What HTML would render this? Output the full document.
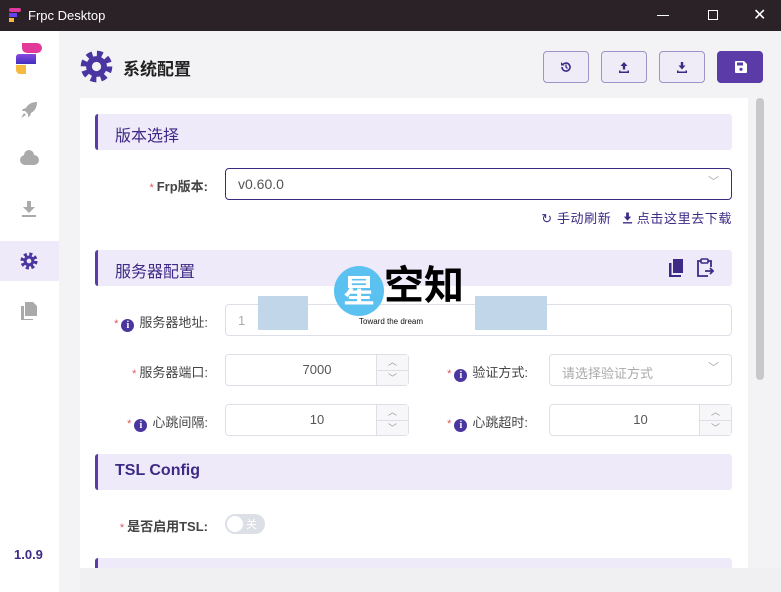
<!DOCTYPE html>
<html><head><meta charset="utf-8"><style>
*{box-sizing:border-box;margin:0;padding:0}
body{width:781px;height:592px;overflow:hidden;font-family:"Liberation Sans","Noto Sans CJK SC",sans-serif;background:#f3f3f5;position:relative;color:#333}
.abs{position:absolute}
.tb{left:0;top:0;width:781px;height:31px;background:#2a2226;color:#fff;font-size:13px}
.side{left:0;top:31px;width:59px;height:561px;background:#fff}
.card{left:80px;top:98px;width:668px;height:494px;background:#fff}
.sh{left:95px;width:637px;height:36px;background:#efeafa;border-left:3px solid #5a3ba8;border-radius:3px;color:#3d2a86;font-size:16px;padding:8px 0 0 17px}
.lbl{font-size:13px;color:#444;text-align:right}
.lbl .s{color:#e0555f;font-size:11px;margin-right:3px}
.i{display:inline-block;width:13px;height:13px;border-radius:50%;background:#4b35a0;color:#fff;font-size:10px;text-align:center;line-height:13px;font-weight:bold;font-family:"Liberation Serif",serif;margin-right:5px;vertical-align:-1px}
.inp{border:1px solid #dcdfe6;border-radius:4px;height:32px;background:#fff;font-size:13px;color:#555}
.num{text-align:center;line-height:30px}
.sp{position:absolute;right:0;top:0;width:32px;height:30px;border-left:1px solid #dcdfe6;background:#f7f7f9;font-size:9px;color:#999;text-align:center}
.sp div{height:15px;line-height:15px}
.sp div+div{border-top:1px solid #dcdfe6}
.btn{top:51px;width:46px;height:32px;border:1px solid #9d93c6;border-radius:4px;background:#efecf8}
.btn svg{position:absolute;left:16px;top:9px}
</style></head><body>
<div class="abs tb"><div class="abs" style="left:9px;top:8px;width:12px;height:15px">
<div style="height:4px;background:#e23a9a;border-radius:2px"></div><div style="width:8px;height:4px;background:#6a3ff0;margin-top:1px"></div><div style="width:5px;height:4px;background:#f5b940;margin-top:1px"></div></div>
<span class="abs" style="left:28px;top:8px">Frpc Desktop</span>
<div class="abs" style="left:657px;top:15px;width:12px;height:1px;background:#fff"></div>
<div class="abs" style="left:708px;top:10px;width:10px;height:10px;border:1px solid #fff"></div>
<span class="abs" style="left:753px;top:5px;font-size:16px">✕</span></div>
<div class="abs side">
<div class="abs" style="left:16px;top:12px;width:26px;height:36px">
<div style="height:10px;background:#e23a9a;border-radius:0 5px 5px 5px;margin-left:6px"></div>
<div style="width:20px;height:10px;background:linear-gradient(#8a48e0,#4030c0);margin-top:1px;border-radius:3px 0 0 0"></div>
<div style="width:10px;height:9px;background:#f5b940;margin-top:1px;border-radius:0 0 0 4px"></div></div>
<svg class="abs" style="left:20px;top:70px" width="18" height="18" viewBox="0 0 18 18"><path d="M17 1C12 1 8 3 6 7L3 8 2 10 5 10 8 13 8 16 10 15 11 12C15 10 17 6 17 1Z" fill="#aaa"/><path d="M4 12 1 17 6 14Z" fill="#aaa"/></svg>
<div class="abs" style="left:20px;top:124px;width:19px;height:10px;background:#aaa;border-radius:6px"></div>
<div class="abs" style="left:24px;top:119px;width:10px;height:10px;background:#aaa;border-radius:50%"></div>
<svg class="abs" style="left:22px;top:170px" width="14" height="16" viewBox="0 0 14 16"><path d="M5 0H9V6H13L7 12 1 6H5Z M0 14H14V16H0Z" fill="#aaa"/></svg>
<div class="abs" style="left:0;top:210px;width:59px;height:40px;background:#efeafa"></div>
<svg class="abs" style="left:20px;top:221px" width="18" height="18" viewBox="-10 -10 20 20"><circle r="7.5" fill="none" stroke="#4b35a0" stroke-width="4" stroke-dasharray="3.3 2.6"/><circle r="6" fill="#4b35a0"/><circle r="2.6" fill="#efeafa"/></svg>
<svg class="abs" style="left:21px;top:271px" width="16" height="18" viewBox="0 0 16 18"><path d="M4 0H12L16 4V14H4Z" fill="#aaa"/><path d="M0 4H3V17H12V18H0Z" fill="#aaa"/></svg>
<span class="abs" style="left:14px;top:516px;font-size:13px;color:#3d2a86;font-weight:bold">1.0.9</span></div>
<svg class="abs" style="left:80px;top:50px" width="33" height="33" viewBox="-10 -10 20 20"><circle r="7.6" fill="none" stroke="#4b35a0" stroke-width="4" stroke-dasharray="3.3 2.67"/><circle r="6.3" fill="#4b35a0"/><circle r="2.8" fill="#f3f3f5"/></svg>
<span class="abs" style="left:123px;top:55px;font-size:17px;font-weight:bold;color:#222">系统配置</span>
<div class="abs btn" style="left:543px"><svg width="12" height="12" viewBox="0 0 12 12"><path d="M2 6A4 4 0 1 0 3.2 3.2" fill="none" stroke="#3d2a86" stroke-width="1.6"/><path d="M1 1V4.5H4.5Z" fill="#3d2a86"/><path d="M6 3.5V6L7.5 7.5" fill="none" stroke="#3d2a86" stroke-width="1.3"/></svg></div>
<div class="abs btn" style="left:601px"><svg width="12" height="12" viewBox="0 0 12 12"><path d="M6 1 9.5 5H7.2V8.5H4.8V5H2.5Z M1 9.5H2.5V10.5H9.5V9.5H11V12H1Z" fill="#3d2a86"/></svg></div>
<div class="abs btn" style="left:659px"><svg width="12" height="12" viewBox="0 0 12 12"><path d="M4.8 1H7.2V4.5H9.5L6 8.5 2.5 4.5H4.8Z M1 9.5H2.5V10.5H9.5V9.5H11V12H1Z" fill="#3d2a86"/></svg></div>
<div class="abs btn" style="left:717px;background:#5a3ba8;border-color:#5a3ba8"><svg width="12" height="12" viewBox="0 0 12 12" style="left:17px;top:9px"><path d="M0 1Q0 0 1 0H9L12 3V11Q12 12 11 12H1Q0 12 0 11Z" fill="#fff"/><rect x="2" y="1.5" width="6" height="3" fill="#5a3ba8"/><circle cx="6" cy="8.3" r="1.6" fill="#5a3ba8"/></svg></div>
<div class="abs card"></div>
<div class="abs" style="left:756px;top:98px;width:8px;height:282px;background:#c8c8c8;border-radius:4px"></div>
<div class="abs sh" style="top:114px">版本选择</div>
<div class="abs lbl" style="left:120px;top:176px;width:88px"><span class="s">*</span><b>Frp版本:</b></div>
<div class="abs inp" style="left:225px;top:168px;width:507px;border-color:#3d2a86;padding:7px 0 0 12px;font-size:14px">v0.60.0<span class="abs" style="right:12px;top:4px;color:#aaa;font-size:11px">﹀</span></div>
<div class="abs" style="right:49px;top:208px;font-size:13px;color:#3d2a86;white-space:nowrap;letter-spacing:0.6px">↻ 手动刷新 <svg width="11" height="12" viewBox="0 0 12 12" style="margin-left:6px;vertical-align:-1px"><path d="M4.5 0H7.5V4.5H10L6 9 2 4.5H4.5Z M1 10.5H11V12H1Z" fill="#3d2a86"/></svg> 点击这里去下载</div>
<div class="abs sh" style="top:250px">服务器配置
<svg class="abs" style="left:571px;top:9px" width="16" height="18" viewBox="0 0 16 18"><path d="M4 0H14V14H4Z" fill="#3d2a86"/><path d="M0 4H2.5V16H12V18H0Z" fill="#3d2a86"/></svg>
<svg class="abs" style="left:599px;top:8px" width="18" height="19" viewBox="0 0 18 19"><path d="M4 3H1V18H11 M11 3H14V9" fill="none" stroke="#3d2a86" stroke-width="1.8"/><rect x="4" y="1" width="7" height="4" rx="1" fill="none" stroke="#3d2a86" stroke-width="1.6"/><path d="M8 13H16M13 10 16 13 13 16" fill="none" stroke="#3d2a86" stroke-width="1.8"/></svg></div>
<div class="abs lbl" style="left:96px;top:312px;width:112px"><span class="s">*</span><span class="i">i</span>服务器地址:</div>
<div class="abs inp" style="left:225px;top:304px;width:507px;padding:8px 0 0 12px;color:#aaa">1</div>
<div class="abs" style="left:258px;top:296px;width:50px;height:34px;background:#c2d6ea"></div>
<div class="abs" style="left:475px;top:296px;width:72px;height:34px;background:#c2d6ea"></div>
<div class="abs" style="left:334px;top:266px;width:50px;height:50px;border-radius:50%;background:#5bc1f0;color:#fff;font-size:32px;font-weight:bold;text-align:center;line-height:50px">星</div>
<div class="abs" style="left:384px;top:264px;font-size:40px;font-weight:bold;color:#000;line-height:44px">空知</div>
<div class="abs" style="left:356px;top:317px;background:#fff;font-size:8px;color:#111;padding:0 3px">Toward the dream</div>
<div class="abs lbl" style="left:96px;top:362px;width:112px"><span class="s">*</span>服务器端口:</div>
<div class="abs inp num" style="left:225px;top:354px;width:184px">7000<div class="sp"><div>︿</div><div>﹀</div></div></div>
<div class="abs lbl" style="left:420px;top:362px;width:108px"><span class="s">*</span><span class="i">i</span>验证方式:</div>
<div class="abs inp" style="left:549px;top:354px;width:183px;padding:8px 0 0 12px;color:#aaa">请选择验证方式<span class="abs" style="right:12px;top:4px;font-size:11px">﹀</span></div>
<div class="abs lbl" style="left:96px;top:412px;width:112px"><span class="s">*</span><span class="i">i</span>心跳间隔:</div>
<div class="abs inp num" style="left:225px;top:404px;width:184px">10<div class="sp"><div>︿</div><div>﹀</div></div></div>
<div class="abs lbl" style="left:420px;top:412px;width:108px"><span class="s">*</span><span class="i">i</span>心跳超时:</div>
<div class="abs inp num" style="left:549px;top:404px;width:183px">10<div class="sp"><div>︿</div><div>﹀</div></div></div>
<div class="abs sh" style="top:454px;font-weight:bold">TSL Config</div>
<div class="abs lbl" style="left:96px;top:516px;width:112px"><span class="s">*</span><b>是否启用TSL:</b></div>
<div class="abs" style="left:225px;top:514px;width:40px;height:20px;border-radius:10px;background:#dcdfe6"><div class="abs" style="left:2px;top:2px;width:16px;height:16px;border-radius:50%;background:#fff"></div><span class="abs" style="left:21px;top:2px;font-size:11px;color:#fff">关</span></div>
<div class="abs sh" style="top:558px;height:30px"></div>
<div class="abs" style="left:80px;top:568px;width:701px;height:24px;background:#f0f0f2"></div>
</body></html>
